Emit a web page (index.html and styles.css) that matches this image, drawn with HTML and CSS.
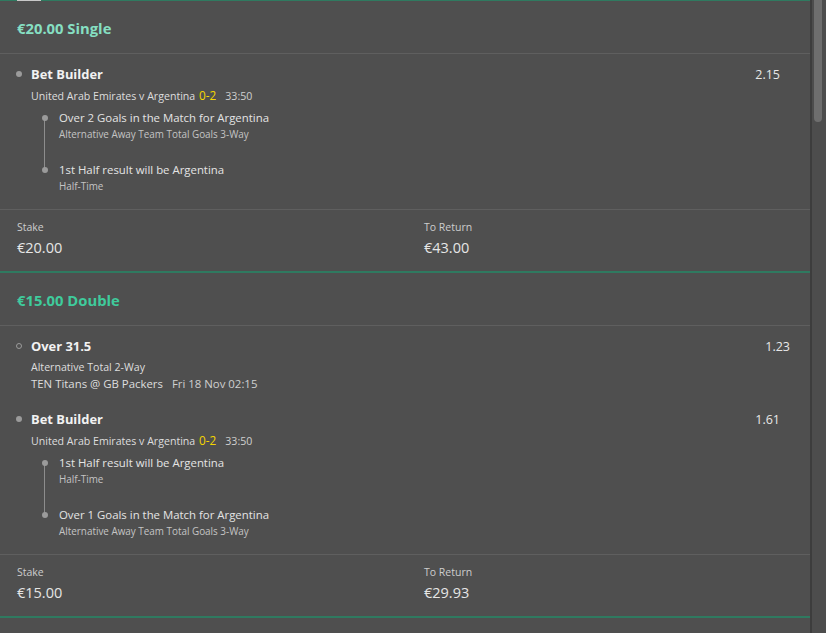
FILE: index.html
```html
<!DOCTYPE html>
<html lang="en">
<head>
<meta charset="utf-8">
<title>Bet slip</title>
<link rel="stylesheet" href="styles.css">
</head>
<body>
<div class="app">
  <div class="list">
    <div class="topline"><span class="tab"></span></div>

    <section class="bet">
      <header class="bet-head head-light">€20.00 Single</header>
      <div class="selections">
        <div class="sel">
          <div class="sel-row">
            <span class="dot"></span>
            <span class="sel-name">Bet Builder</span>
            <span class="odds odds-bb">2.15</span>
          </div>
          <div class="info">United Arab Emirates v Argentina <span class="score">0-2</span><span class="clock">33:50</span></div>
          <div class="legs">
            <div class="leg">
              <div class="leg-name">Over 2 Goals in the Match for Argentina</div>
              <div class="leg-market">Alternative Away Team Total Goals 3-Way</div>
            </div>
            <div class="leg">
              <div class="leg-name">1st Half result will be Argentina</div>
              <div class="leg-market">Half-Time</div>
            </div>
          </div>
        </div>
      </div>
      <div class="stake-row">
        <div class="stake-col">
          <div class="stake-label">Stake</div>
          <div class="stake-value">€20.00</div>
        </div>
        <div class="stake-col">
          <div class="stake-label">To Return</div>
          <div class="stake-value">€43.00</div>
        </div>
      </div>
    </section>

    <section class="bet">
      <header class="bet-head">€15.00 Double</header>
      <div class="selections">
        <div class="sel">
          <div class="sel-row">
            <span class="dot dot-hollow"></span>
            <span class="sel-name">Over 31.5</span>
            <span class="odds">1.23</span>
          </div>
          <div class="info">Alternative Total 2-Way</div>
          <div class="info info-tight">TEN Titans @ GB Packers<span class="clock">Fri 18 Nov 02:15</span></div>
        </div>
        <div class="sel">
          <div class="sel-row">
            <span class="dot"></span>
            <span class="sel-name">Bet Builder</span>
            <span class="odds odds-bb">1.61</span>
          </div>
          <div class="info">United Arab Emirates v Argentina <span class="score">0-2</span><span class="clock">33:50</span></div>
          <div class="legs">
            <div class="leg">
              <div class="leg-name">1st Half result will be Argentina</div>
              <div class="leg-market">Half-Time</div>
            </div>
            <div class="leg">
              <div class="leg-name">Over 1 Goals in the Match for Argentina</div>
              <div class="leg-market">Alternative Away Team Total Goals 3-Way</div>
            </div>
          </div>
        </div>
      </div>
      <div class="stake-row">
        <div class="stake-col">
          <div class="stake-label">Stake</div>
          <div class="stake-value">€15.00</div>
        </div>
        <div class="stake-col">
          <div class="stake-label">To Return</div>
          <div class="stake-value">€29.93</div>
        </div>
      </div>
    </section>
  </div>
  <div class="scrollbar"><div class="thumb"></div></div>
</div>
</body>
</html>
```
FILE: styles.css
```css
* { box-sizing: border-box; }
html, body {
  margin: 0;
  padding: 0;
  height: 100%;
  background: #4f4f4f;
  overflow: hidden;
}
body {
  font-family: "Open Sans", "Noto Sans", sans-serif;
  color: #e6e6e6;
}
.app {
  display: flex;
  height: 633px;
}
.list {
  flex: 0 0 810px;
  width: 810px;
  overflow: hidden;
}
.topline {
  height: 1px;
  background: #2f7a60;
  padding-left: 17px;
  display: flex;
}
.tab {
  width: 24px;
  height: 1px;
  background: #c9c9c9;
}
.bet {
  border-bottom: 2px solid #2f7a60;
}
.bet-head {
  height: 53px;
  display: flex;
  align-items: center;
  padding: 1px 17px 0;
  font-size: 14.8px;
  font-weight: 700;
  color: #3fcb9c;
  border-bottom: 1px solid #5f5f5f;
}
.bet-head.head-light {
  color: #86dfc2;
}
.selections {
  padding-bottom: 15px;
  border-bottom: 1px solid #5f5f5f;
}
.sel {
  padding-top: 11px;
}
.sel + .sel {
  padding-top: 18px;
}
.sel-row {
  display: flex;
  align-items: center;
  height: 18px;
  padding-left: 16px;
}
.dot {
  width: 6px;
  height: 6px;
  border-radius: 50%;
  background: #9b9b9b;
  margin-right: 9px;
  flex: 0 0 auto;
}
.dot-hollow {
  background: transparent;
  border: 1px solid #9b9b9b;
}
.sel-name {
  font-size: 12.9px;
  font-weight: 700;
  color: #f2f2f2;
  flex: 1;
}
.odds {
  font-size: 12.5px;
  color: #e8e8e8;
  margin-right: 20px;
}
.odds.odds-bb {
  margin-right: 30px;
}
.info {
  margin-top: 4px;
  padding-left: 31px;
  font-size: 10.6px;
  line-height: 16px;
  height: 16px;
  color: #dedede;
  white-space: nowrap;
}
.info.info-tight {
  margin-top: 1px;
  font-size: 11.4px;
}
.score {
  color: #f4d600;
  font-size: 11.8px;
  margin-left: 1px;
}
.clock {
  color: #cfcfcf;
  margin-left: 9px;
}
.legs {
  position: relative;
  margin-top: 7px;
  padding-left: 59px;
  display: flex;
  flex-direction: column;
  gap: 20px;
}
.legs::before {
  content: "";
  position: absolute;
  left: 44px;
  top: 8px;
  bottom: 24px;
  width: 1px;
  background: #8d8d8d;
}
.leg {
  position: relative;
}
.leg::before {
  content: "";
  position: absolute;
  left: -17.5px;
  top: 5px;
  width: 6px;
  height: 6px;
  border-radius: 50%;
  background: #9b9b9b;
}
.leg-name {
  font-size: 11.4px;
  line-height: 16px;
  color: #e4e4e4;
  white-space: nowrap;
}
.leg-market {
  font-size: 9.9px;
  line-height: 16px;
  color: #c4c4c4;
  white-space: nowrap;
}
.stake-row {
  display: grid;
  grid-template-columns: 1fr 1fr;
  column-gap: 38px;
  padding: 9px 17px 13px;
}
.stake-label {
  font-size: 10.5px;
  line-height: 16px;
  color: #cdcdcd;
}
.stake-value {
  margin-top: 3px;
  font-size: 14.5px;
  line-height: 20px;
  color: #e6e6e6;
}
.scrollbar {
  flex: 1;
  border-left: 2px solid #3d3d3d;
  background: #4d4d4d;
  padding-left: 2px;
}
.thumb {
  width: 8px;
  height: 122px;
  background: #6e6e6e;
  border-radius: 0 0 4px 4px;
}
```
